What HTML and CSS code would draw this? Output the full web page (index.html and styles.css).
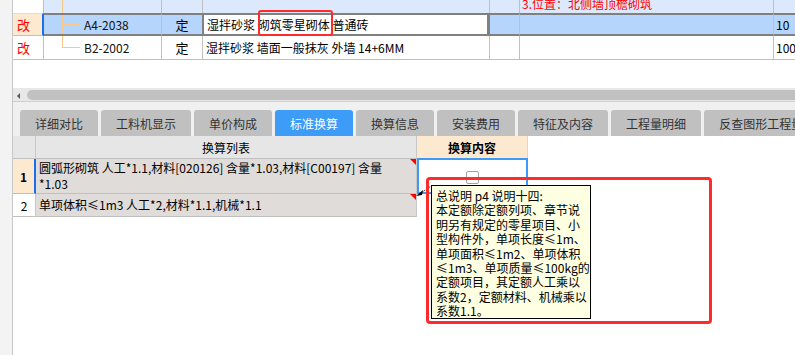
FILE: index.html
```html
<!DOCTYPE html>
<html lang="zh-CN">
<head>
<meta charset="utf-8">
<title>标准换算</title>
<link rel="stylesheet" href="styles.css">
</head>
<body>
<div class="app">
  <div class="strip"></div>
  <div class="main">
    <div class="topgrid">
      <div class="row r0">
        <div class="c flag"></div>
        <div class="c tree"></div>
        <div class="c"></div>
        <div class="c"></div>
        <div class="c"></div>
        <div class="c note"><span class="cut">3.位置：北侧墙顶檐砌筑</span></div>
        <div class="c last"></div>
      </div>
      <div class="row r1">
        <div class="c flag">改</div>
        <div class="c tree code">A4-2038</div>
        <div class="c ctr">定</div>
        <div class="c desc">湿拌砂浆 砌筑零星砌体 普通砖</div>
        <div class="c"></div>
        <div class="c"></div>
        <div class="c last num">10</div>
      </div>
      <div class="row r2">
        <div class="c flag">改</div>
        <div class="c tree code">B2-2002</div>
        <div class="c ctr">定</div>
        <div class="c desc">湿拌砂浆 墙面一般抹灰 外墙 14+6MM</div>
        <div class="c"></div>
        <div class="c"></div>
        <div class="c last num">100</div>
      </div>
    </div>
    <div class="spacer"></div>
    <div class="hscroll">
      <span class="arrow"></span>
      <span class="thumb"></span>
    </div>
    <div class="tabbar">
      <div class="tab">详细对比</div>
      <div class="tab">工料机显示</div>
      <div class="tab">单价构成</div>
      <div class="tab active">标准换算</div>
      <div class="tab">换算信息</div>
      <div class="tab">安装费用</div>
      <div class="tab">特征及内容</div>
      <div class="tab">工程量明细</div>
      <div class="tab">反查图形工程量</div>
    </div>
    <div class="lgrid">
      <div class="lrow lhead">
        <div class="lh"></div>
        <div class="lh">换算列表</div>
        <div class="lh content">换算内容</div>
      </div>
      <div class="lrow l1">
        <div class="ln sel">1</div>
        <div class="ll mark">圆弧形砌筑 人工*1.1,材料[020126] 含量*1.03,材料[C00197] 含量<br>*1.03</div>
        <div class="lc selcell"><span class="check"></span></div>
      </div>
      <div class="lrow l2">
        <div class="ln">2</div>
        <div class="ll mark">单项体积≤1m3 人工*2,材料*1.1,机械*1.1</div>
        <div class="lc"></div>
      </div>
    </div>
  </div>
</div>

<div class="redbox top-box"></div>
<svg class="pointer" width="20" height="16" viewBox="0 0 20 16">
  <line x1="7" y1="9" x2="17" y2="2" stroke="#000" stroke-width="1" stroke-dasharray="1 1"/>
  <polygon points="2,12 9,6 8,11" fill="#000"/>
</svg>
<div class="tooltip">总说明 p4 说明十四:<br>本定额除定额列项、章节说<br>明另有规定的零星项目、小<br>型构件外，单项长度≤1m、<br>单项面积≤1m2、单项体积<br>≤1m3、单项质量≤100kg的<br>定额项目，其定额人工乘以<br>系数2，定额材料、机械乘以<br>系数1.1。</div>
<div class="redbox big-box"></div>
</body>
</html>
```

FILE: styles.css
```css
* { box-sizing: border-box; }
html, body { margin: 0; padding: 0; }
body {
  width: 795px;
  height: 355px;
  overflow: hidden;
  position: relative;
  background: #fff;
  color: #000;
  font-family: "Noto Sans CJK SC", "Noto Sans", sans-serif;
  font-size: 12px;
}
.app { display: flex; height: 355px; }
.strip {
  width: 13px;
  flex: none;
  background: #f3f3f3;
  border-right: 1px solid #c8c8c8;
}
.main { flex: 1; min-width: 0; display: flex; flex-direction: column; }

/* top grid */
.row {
  display: grid;
  grid-template-columns: 31px 118px 41px 287px 30px 254px 1fr;
}
.c {
  border-right: 1px solid #c0c0c0;
  display: flex;
  align-items: center;
  white-space: nowrap;
  overflow: hidden;
  line-height: 14px;
}
.c.last { border-right: none; }
.r0 { height: 13px; }
.r0 .c { background: #dce8fb; }
.r0 .flag { background: #fff; }
.r0 .tree {
  background: linear-gradient(#fbc987, #fbc987) 18px 0 / 1px 100% no-repeat, #dce8fb;
}
.note { color: #f00; align-items: flex-end; padding-left: 2px; }
.cut { line-height: 12px; margin-bottom: 3px; }

.r1 { height: 23px; }
.r1 .c {
  background: #b5d5fc;
  border-top: 2px solid #808080;
  border-bottom: 2px solid #808080;
}
.r1 .flag {
  background: #fde9cf;
  border-top: 1px solid #dcdcdc;
  border-bottom: 1px solid #c0c0c0;
  border-right: 2px solid #1a6ee8;
}
.r1 .tree {
  background:
    linear-gradient(#fbc987, #fbc987) 18px 0 / 1px 100% no-repeat,
    linear-gradient(#fbc987, #fbc987) 18px 9px / 18px 1px no-repeat,
    #b5d5fc;
}
.r1 .desc {
  background: #fff;
  border-left: 2px solid #808080;
  border-right: 3px solid #808080;
  margin-left: -1px;
  padding-left: 3px;
}
.r2 { height: 24px; }
.r2 .c { border-bottom: 1px solid #c0c0c0; }
.r2 .tree {
  background:
    linear-gradient(#fbc987, #fbc987) 18px 0 / 1px 11px no-repeat,
    linear-gradient(#fbc987, #fbc987) 18px 11px / 18px 1px no-repeat;
}
.flag { color: #f00; padding-left: 4px; font-size: 13px; }
.code { padding-left: 40px; color: #111; }
.ctr { justify-content: center; font-size: 13px; }
.desc { padding-left: 3px; font-size: 12px; }
.num { padding-left: 2px; }

.spacer { height: 28px; }
.hscroll {
  height: 13px;
  background: #e8e8e8;
  padding-top: 2px;
  display: flex;
  align-items: flex-start;
}
.arrow {
  width: 0; height: 0;
  margin: 3px 0 0 4px;
  border-right: 3px solid #555;
  border-top: 3px solid transparent;
  border-bottom: 3px solid transparent;
}
.thumb {
  flex: 1;
  height: 10px;
  margin-left: 7px;
  background: #c1c1c1;
  border-radius: 5px 0 0 5px;
}

/* tabs */
.tabbar {
  border-top: 1px solid #cfcfcf;
  background: #f0f0f0;
  padding: 8px 0 0 7px;
  display: flex;
  gap: 3px;
  overflow: hidden;
}
.tab {
  height: 26px;
  flex: none;
  padding: 0 15px;
  background: #c0c0c0;
  color: #333;
  border-radius: 3px 3px 0 0;
  display: flex;
  align-items: center;
  font-size: 12px;
  white-space: nowrap;
}
.tab.active { background: #3d9cf7; color: #fff; }

/* lower grid */
.lrow {
  display: grid;
  grid-template-columns: 23px 381px 111px;
}
.lhead { height: 23px; }
.lh {
  background: #e6e6e6;
  border-right: 1px solid #c8c8c8;
  border-bottom: 1px solid #c0c0c0;
  display: flex;
  align-items: center;
  justify-content: center;
  font-size: 12px;
}
.lh.content { background: #fde9cf; font-weight: bold; border-right: 1px solid #d8d8d8; }
.l1 { height: 35px; }
.l2 { height: 23px; }
.ln {
  border-right: 1px solid #c8c8c8;
  border-bottom: 1px solid #c0c0c0;
  display: flex;
  align-items: center;
  justify-content: center;
  font-size: 12px;
  background: #fff;
}
.ln.sel {
  background: #fde9cf;
  font-weight: bold;
  border-right: 2px solid #1a6ee8;
}
.ll {
  background: #e0dcd9;
  border-right: 1px solid #c8c8c8;
  border-bottom: 1px solid #c0c0c0;
  padding: 0 3px;
  font-size: 12px;
  line-height: 16px;
  white-space: nowrap;
  display: flex;
  flex-direction: column;
  justify-content: center;
  position: relative;
}
.l1 .ll { display: block; padding-top: 1px; }
.mark::after {
  content: "";
  position: absolute;
  top: 0;
  right: 0;
  border-top: 6px solid #f00;
  border-left: 6px solid transparent;
}
.lc { background: #fff; }
.selcell {
  border: 2px solid #3d9af5;
  margin-top: -1px;
  display: flex;
  justify-content: center;
  padding-top: 11px;
}
.check {
  width: 13px;
  height: 13px;
  border: 1px solid #a0a0a0;
  border-radius: 2px;
  background: #fff;
  margin-left: 0;
}

/* overlays */
.redbox {
  position: absolute;
  border: 2px solid #ff2a2a;
  border-radius: 3px;
}
.top-box { left: 258px; top: 10px; width: 75px; height: 26px; }
.big-box {
  left: 426px; top: 177px; width: 286px; height: 147px;
  border-width: 3px;
  border-radius: 4px;
}
.pointer { position: absolute; left: 414px; top: 184px; }
.tooltip {
  position: absolute;
  left: 431px;
  top: 185px;
  width: 160px;
  height: 134px;
  background: #ffffe1;
  border: 1px solid #000;
  padding: 3px 4px;
  font-size: 12px;
  line-height: 14.4px;
  white-space: nowrap;
  overflow: hidden;
}
```
